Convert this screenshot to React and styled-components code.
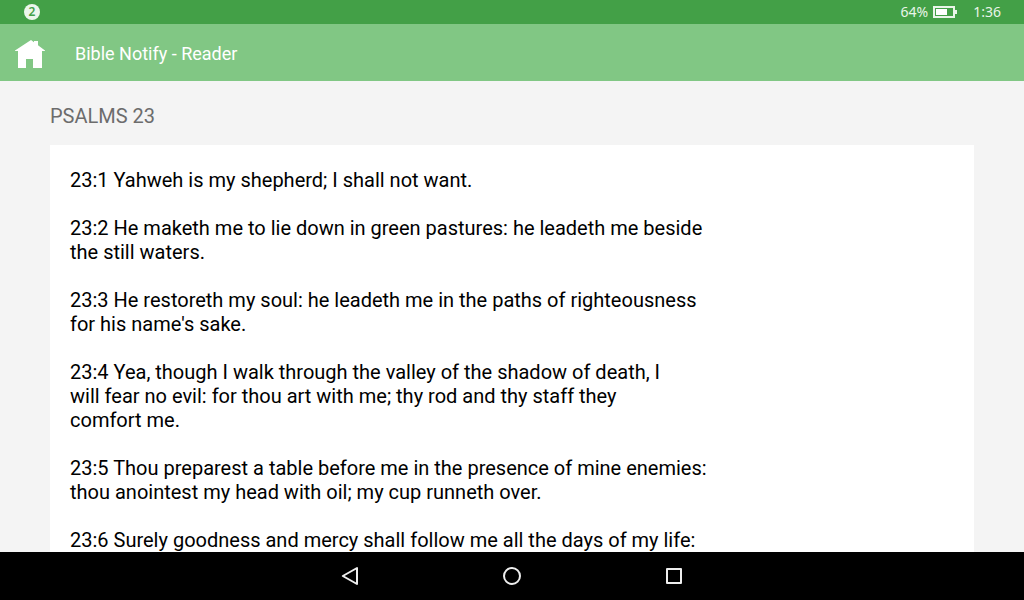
import React from "react";
import styled, { createGlobalStyle } from "styled-components";

const GlobalStyle = createGlobalStyle`
  *, *::before, *::after { box-sizing: border-box; }
  body { margin: 0; background: #f4f4f4; font-family: Roboto, "Liberation Sans", sans-serif; }
`;

const Screen = styled.div`
  display: flex;
  flex-direction: column;
  height: 100vh;
`;

const StatusBar = styled.div`
  flex: none;
  display: flex;
  align-items: center;
  height: 24px;
  padding: 0 23px 0 24px;
  background: #43a047;
  color: #e9f5e9;
  font: 14px/24px "Noto Sans", "Open Sans", sans-serif;
`;

const NotificationCount = styled.span`
  width: 16px;
  height: 16px;
  border-radius: 50%;
  background: #ecf6ec;
  color: #43a047;
  font-size: 12px;
  font-weight: 600;
  line-height: 16px;
  text-align: center;
`;

const BatteryStatus = styled.span`
  display: flex;
  align-items: center;
  gap: 5px;
  margin-left: auto;
`;

const Clock = styled.time`
  margin-left: 16px;
`;

const AppBar = styled.header`
  flex: none;
  display: flex;
  align-items: center;
  gap: 30px;
  height: 57px;
  padding: 2px 15px 0;
  background: #81c784;
  color: #fff;
`;

const IconButton = styled.button`
  display: flex;
  padding: 0;
  border: 0;
  background: none;
  color: inherit;
  cursor: pointer;
`;

const AppTitle = styled.h1`
  margin: 0;
  font-size: 18px;
  font-weight: 400;
  line-height: 24px;
`;

const Reader = styled.main`
  flex: 1;
  min-height: 0;
  overflow-y: auto;
  scrollbar-width: none;
  padding: 23px 50px 0;
`;

const ChapterTitle = styled.h2`
  margin: 0 0 17px;
  color: #6c6c6c;
  font-size: 20px;
  font-weight: 400;
  line-height: 24px;
`;

const Passage = styled.article`
  display: flex;
  flex-direction: column;
  gap: 24px;
  padding: 23px 20px;
  background: #fff;
  color: #000;
  font-size: 20px;
  line-height: 24px;
`;

const Verse = styled.p`
  margin: 0;
  white-space: pre-line;
`;

const NavBar = styled.nav`
  flex: none;
  display: flex;
  align-items: center;
  justify-content: center;
  gap: 138px;
  height: 48px;
  background: #000;
  color: #eee;
`;

const verses = [
  "23:1 Yahweh is my shepherd; I shall not want.",
  "23:2 He maketh me to lie down in green pastures: he leadeth me beside\nthe still waters.",
  "23:3 He restoreth my soul: he leadeth me in the paths of righteousness\nfor his name's sake.",
  "23:4 Yea, though I walk through the valley of the shadow of death, I\nwill fear no evil: for thou art with me; thy rod and thy staff they\ncomfort me.",
  "23:5 Thou preparest a table before me in the presence of mine enemies:\nthou anointest my head with oil; my cup runneth over.",
  "23:6 Surely goodness and mercy shall follow me all the days of my life:",
];

const BatteryIcon = () => (
  <svg width="24" height="12" viewBox="0 0 24 12" fill="none" aria-hidden="true">
    <rect x="1" y="1" width="20" height="10" stroke="#e9f5e9" strokeWidth="2" />
    <rect x="3" y="3" width="11" height="6" fill="#fff" />
    <rect x="22" y="4" width="2" height="4" fill="#e9f5e9" />
  </svg>
);

const HomeIcon = () => (
  <svg width="30" height="30" viewBox="0 0 30 30" fill="currentColor" aria-hidden="true">
    <path d="M16 1 L19 3.3 V2 H23 V6.3 L30 11.5 V12 H27 V29 H18 V20 H11 V29 H3 V12 H0 V11.5 Z" />
  </svg>
);

const NavIcon = ({ children }) => (
  <svg width="24" height="24" viewBox="0 0 24 24" fill="none" stroke="currentColor" strokeWidth="2" strokeLinejoin="round" aria-hidden="true">
    {children}
  </svg>
);

export default function App() {
  return (
    <Screen>
      <GlobalStyle />
      <StatusBar>
        <NotificationCount>2</NotificationCount>
        <BatteryStatus>
          64%
          <BatteryIcon />
        </BatteryStatus>
        <Clock>1:36</Clock>
      </StatusBar>
      <AppBar>
        <IconButton type="button" aria-label="Home"><HomeIcon /></IconButton>
        <AppTitle>Bible Notify - Reader</AppTitle>
      </AppBar>
      <Reader>
        <ChapterTitle>PSALMS 23</ChapterTitle>
        <Passage>
          {verses.map((text) => <Verse key={text}>{text}</Verse>)}
        </Passage>
      </Reader>
      <NavBar aria-label="System">
        <IconButton type="button" aria-label="Back">
          <NavIcon><path d="M19 4 V20 L4.8 12 Z" /></NavIcon>
        </IconButton>
        <IconButton type="button" aria-label="Home screen">
          <NavIcon><circle cx="12" cy="12" r="8" /></NavIcon>
        </IconButton>
        <IconButton type="button" aria-label="Recent apps">
          <NavIcon><rect x="5" y="5" width="14" height="14" /></NavIcon>
        </IconButton>
      </NavBar>
    </Screen>
  );
}
